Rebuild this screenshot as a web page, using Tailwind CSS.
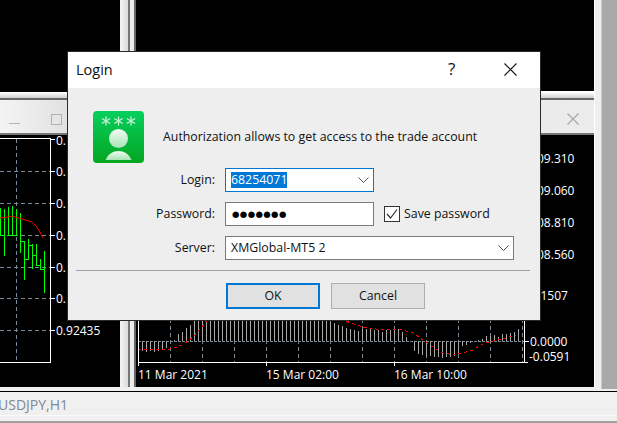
<!doctype html>
<html><head><meta charset="utf-8"><script src="https://cdn.jsdelivr.net/npm/@tailwindcss/browser@4"></script></head>
<body class="m-0 overflow-hidden bg-[#f0f0f0]">
<div class="relative flex h-[423px] w-[617px] flex-col overflow-hidden font-['Open_Sans','Noto_Sans',sans-serif] text-[12px] text-[#111]">
  <!-- desktop -->
  <div class="relative h-[391px] w-full bg-[#f0f0f0]">
    <!-- top-left black -->
    <div class="absolute left-0 top-0 h-[92px] w-[120px] bg-black"></div>
    <!-- splitter -->
    <div class="absolute left-[120px] top-0 flex h-[387px] w-[16px]">
      <div class="h-full w-[8px] bg-gradient-to-r from-[#f4f4f4] to-[#dcdcdc]"></div>
      <div class="h-full w-[2px] bg-[#777]"></div>
      <div class="h-full w-[4px] bg-[#ececec]"></div>
      <div class="h-full w-[2px] bg-[#666]"></div>
    </div>
    <!-- top-right black -->
    <div class="absolute left-[136px] top-0 h-[92px] w-[458px] border-b border-white bg-black"></div>
    <!-- right sidebar -->
    <div class="absolute left-[594px] top-0 flex h-[389px] w-[23px]">
      <div class="h-full w-[7px] border-l border-white bg-[#efefef]"></div>
      <div class="h-full w-[1px] bg-[#c8c8c8]"></div>
      <div class="h-full flex-1 bg-[#a9a9a9]"></div>
    </div>

    <!-- left window -->
    <div class="absolute left-0 top-[92px] flex h-[295px] w-[120px] flex-col">
      <div class="h-[6px] border-t border-white bg-gradient-to-b from-[#f8f8f8] to-[#cfcfcf]"></div>
      <div class="h-[2px] bg-[#666]"></div>
      <div class="relative h-[35px] border-b-2 border-[#777] bg-gradient-to-r from-[#f4f4f4] to-[#d4d4d4]">
        <div class="absolute left-[9px] top-[23px] h-px w-[11px] bg-[#b5b5b5]"></div>
        <div class="absolute left-[51px] top-[14px] h-[11px] w-[11px] border border-[#b0b0b0]"></div>
      </div>
      <svg class="block flex-1 bg-black" width="120" height="252" viewBox="0 136 120 252" shape-rendering="crispEdges">
        <g stroke="#778899" stroke-dasharray="4 3" fill="none">
          <path d="M16.5 140V363M0 172.5H50M0 204.5H50M0 236.5H50M0 268.5H50M0 299.5H50M0 331.5H50"/>
        </g>
        <g stroke="#00ff00" fill="none">
          <path d="M0.5 209V236M4.5 210V257M8.5 208V236M12.5 207V236M16.5 210V236M20.5 214V254M24.5 242V281M28.5 240V261M32.5 245V270M36.5 245V266M40.5 260V271M44.5 252V294"/>
          <path d="M0 236.5H5M8 236.5H17M20 242.5H25M24 260.5H29M28 246.5H33M32 256.5H37M36 266.5H41M40 270.5H45"/>
        </g>
        <polyline points="0,219 8,218 12,217 22,220 32,223 37,228 43,239" fill="none" stroke="#ff0000" shape-rendering="auto"/>
        <path d="M0 139.5H50.5V363.5H0M51 140.5H55M51 172.5H55M51 204.5H55M51 236.5H55M51 268.5H55M51 299.5H55M51 331.5H55" fill="none" stroke="#fff"/>
        <g fill="#fff" class="text-[12px]" shape-rendering="auto">
          <text x="56" y="146">0.</text><text x="56" y="177">0.</text><text x="56" y="209">0.</text>
          <text x="56" y="241">0.</text><text x="56" y="273">0.</text><text x="56" y="304">0.</text>
          <text x="56" y="336">0.92435</text>
        </g>
      </svg>
    </div>

    <!-- right window -->
    <div class="absolute left-[136px] top-[92px] flex h-[295px] w-[458px] flex-col">
      <div class="h-[6px] border-t border-white bg-gradient-to-b from-[#f8f8f8] to-[#cfcfcf]"></div>
      <div class="h-[2px] bg-[#666]"></div>
      <div class="relative h-[35px] border-b-2 border-[#777] bg-gradient-to-r from-[#e4e4e4] to-[#ececec]">
        <svg class="absolute left-[431px] top-[13px]" width="12" height="12" viewBox="0 0 12 12"><path d="M0.5 0.5L11.5 11.5M11.5 0.5L0.5 11.5" stroke="#aaa" stroke-width="1.4"/></svg>
      </div>
      <svg class="block flex-1 bg-black" width="458" height="252" viewBox="136 136 458 252" shape-rendering="crispEdges">
        <path d="M170.5 320V363M202.5 320V363M234.5 320V363M266.5 320V363M298.5 320V363M330.5 320V363M362.5 320V363M394.5 320V363M426.5 320V363M458.5 320V363M490.5 320V363M522.5 320V363" stroke="#778899" stroke-dasharray="4 3" fill="none"/>
        <path d="M138 342.5H524" stroke="#778899" stroke-dasharray="3 1" fill="none"/>
        <path fill="none" stroke="#a8a8a8" d="M142.5 342V352M146.5 342V353M150.5 342V352M154.5 342V353M158.5 342V352M162.5 342V351M166.5 342V349M174.5 342V341M178.5 342V335M182.5 342V333M186.5 342V329M190.5 342V326M194.5 342V320M198.5 342V320M202.5 342V320M206.5 342V320M210.5 342V320M214.5 342V320M218.5 342V320M222.5 342V320M226.5 342V320M230.5 342V320M234.5 342V320M238.5 342V320M242.5 342V320M246.5 342V320M250.5 342V320M254.5 342V320M258.5 342V320M262.5 342V320M266.5 342V320M270.5 342V320M274.5 342V320M278.5 342V320M282.5 342V320M286.5 342V320M290.5 342V320M294.5 342V320M298.5 342V320M302.5 342V320M306.5 342V320M310.5 342V320M314.5 342V320M318.5 342V320M322.5 342V320M326.5 342V320M330.5 342V323M334.5 342V324M338.5 342V326M342.5 342V327M346.5 342V329M350.5 342V330M354.5 342V331M358.5 342V332M362.5 342V330M366.5 342V330M370.5 342V329M374.5 342V331M378.5 342V331M382.5 342V333M386.5 342V331M390.5 342V331M394.5 342V330M398.5 342V330M402.5 342V333M406.5 342V338M414.5 342V352M418.5 342V355M422.5 342V356M426.5 342V357M430.5 342V357M434.5 342V358M438.5 342V358M442.5 342V359M446.5 342V358M450.5 342V358M454.5 342V357M458.5 342V354M462.5 342V347M466.5 342V346M470.5 342V344M478.5 342V341M482.5 342V340M486.5 342V337M490.5 342V337M494.5 342V336M498.5 342V338M502.5 342V335M506.5 342V335M510.5 342V334M514.5 342V333M518.5 342V330"/>
        <g fill="none" stroke="#ff0000" stroke-dasharray="3 3">
          <polyline points="138,350 170,350 174,349 182,346 188,342 194,337 199,331 205,324 208,320"/>
          <polyline points="341,320 351,324 363,328 376,330 399,330 413,334 419,338 428,345 436,350 443,354 454,356 463,354 473,351 479,347 486,344 496,341 506,339 516,336"/>
        </g>
        <path d="M138.5 320V367M138 363.5H528M266.5 363V367M394.5 363V367M524.5 320V363M524 342.5H529" fill="none" stroke="#fff"/>
        <g fill="#fff" class="text-[12px]" shape-rendering="auto">
          <text x="537" y="164">09.310</text><text x="537" y="196">09.060</text><text x="537" y="228">08.810</text><text x="537" y="260">08.560</text>
          <text x="540.500" y="301">1507</text>
          <text x="530" y="347">0.0000</text><text x="529" y="362">-0.0591</text>
          <text x="138" y="380">11 Mar 2021</text><text x="266" y="380">15 Mar 02:00</text><text x="394" y="380">16 Mar 10:00</text>
        </g>
      </svg>
    </div>
  </div>

  <!-- status bar -->
  <div class="flex h-[32px] flex-col border-t border-black bg-[#f0f0f0]">
    <div class="flex h-[24px] items-center border-b border-[#fafafa] pt-[2px] text-[14px] leading-none text-[#7f8a96]"><span class="ml-[-2px]">USDJPY,H1</span></div>
    <div class="h-[5px]"></div>
    <div class="h-[2px] bg-[#a0a0a0]"></div>
  </div>

  <!-- dialog -->
  <div class="absolute left-[67px] top-[51px] flex h-[270px] w-[474px] flex-col border border-[#2a2a2a] bg-[#eeeeee] text-[12.350px]">
    <div class="relative flex h-[36px] items-center bg-white pl-[8px] text-[14.500px] text-[#111]">Login
      <span class="absolute left-[380px] top-[7px] text-[17px] leading-[20px]">?</span>
      <svg class="absolute left-[436px] top-[11px]" width="13" height="13" viewBox="0 0 13 13"><path d="M0.5 0.5L12.5 12.5M12.5 0.5L0.5 12.5" stroke="#111" stroke-width="1.1" fill="none"/></svg>
    </div>
    <div class="flex flex-1 flex-col">
      <div class="ml-[25px] mt-[23px] flex h-[52px] items-center gap-[19px]">
        <svg width="51" height="52" viewBox="0 0 51 52">
          <defs>
            <linearGradient id="ig" x1="0" y1="0" x2="0" y2="1"><stop offset="0" stop-color="#06cf5f"/><stop offset="1" stop-color="#04a61f"/></linearGradient>
            <linearGradient id="pg" x1="0" y1="0" x2="0" y2="1"><stop offset="0" stop-color="#f2fbf3"/><stop offset="1" stop-color="#a8e4b4"/></linearGradient>
          </defs>
          <rect x="0" y="0" width="51" height="52" rx="4" fill="url(#ig)"/>
          <g stroke="#c8f0d2" stroke-width="1.300" fill="none">
            <path d="M13 5.500V14.500M8.800 7.500L17.200 12.500M17.200 7.500L8.800 12.500"/>
            <path d="M25.500 5.500V14.500M21.300 7.500L29.700 12.500M29.700 7.500L21.300 12.500"/>
            <path d="M38 5.500V14.500M33.800 7.500L42.200 12.500M42.200 7.500L33.800 12.500"/>
          </g>
          <circle cx="25.500" cy="27.500" r="9.500" fill="url(#pg)"/>
          <path d="M12.500 49C15 43 20 40 25.500 40C31 40 36 43 38.500 49Z" fill="url(#pg)"/>
        </svg>
        <span class="text-[#111]">Authorization allows to get access to the trade account</span>
      </div>
      <div class="mt-[5px] flex flex-col gap-[10px]">
        <div class="flex h-[24px] items-center">
          <label class="w-[147px] text-right">Login:</label>
          <div class="ml-[10px] flex h-[24px] w-[149px] items-center justify-between border border-[#0078d7] bg-white pl-[5px] pr-[4px]">
            <span class="bg-[#0078d7] leading-[16px] text-white">68254071</span>
            <svg width="11" height="6" viewBox="0 0 11 6"><path d="M0.500 0.500L5.500 5.500L10.500 0.500" stroke="#555" fill="none"/></svg>
          </div>
        </div>
        <div class="flex h-[24px] items-center">
          <label class="w-[147px] text-right">Password:</label>
          <div class="ml-[10px] flex h-[24px] w-[149px] items-center border border-[#7a7a7a] bg-white pl-[6px] font-['DejaVu_Sans'] text-[8.500px] leading-none tracking-[0.400px] text-black">●●●●●●●</div>
          <svg class="ml-[10px]" width="16" height="16" viewBox="0 0 16 16"><rect x="0.500" y="0.500" width="15" height="15" fill="#fff" stroke="#333"/><path d="M3 8L6.500 12L13 3.500" stroke="#333" stroke-width="1.200" fill="none"/></svg>
          <span class="ml-[4px]">Save password</span>
        </div>
        <div class="flex h-[24px] items-center">
          <label class="w-[147px] text-right">Server:</label>
          <div class="ml-[10px] flex h-[24px] w-[289px] items-center justify-between border border-[#7a7a7a] bg-white pl-[5px] pr-[4px]">
            <span>XMGlobal-MT5 2</span>
            <svg width="11" height="6" viewBox="0 0 11 6"><path d="M0.500 0.500L5.500 5.500L10.500 0.500" stroke="#555" fill="none"/></svg>
          </div>
        </div>
      </div>
      <div class="mx-[8px] mt-[10px] h-px w-[454px] bg-[#a0a0a0]"></div>
      <div class="ml-[158px] mt-[12px] flex gap-[11px]">
        <button class="h-[26px] w-[94px] border-2 border-[#0078d7] bg-[#e1e1e1]">OK</button>
        <button class="h-[26px] w-[94px] border border-[#adadad] bg-[#e1e1e1]">Cancel</button>
      </div>
    </div>
  </div>
</div>
</body></html>
